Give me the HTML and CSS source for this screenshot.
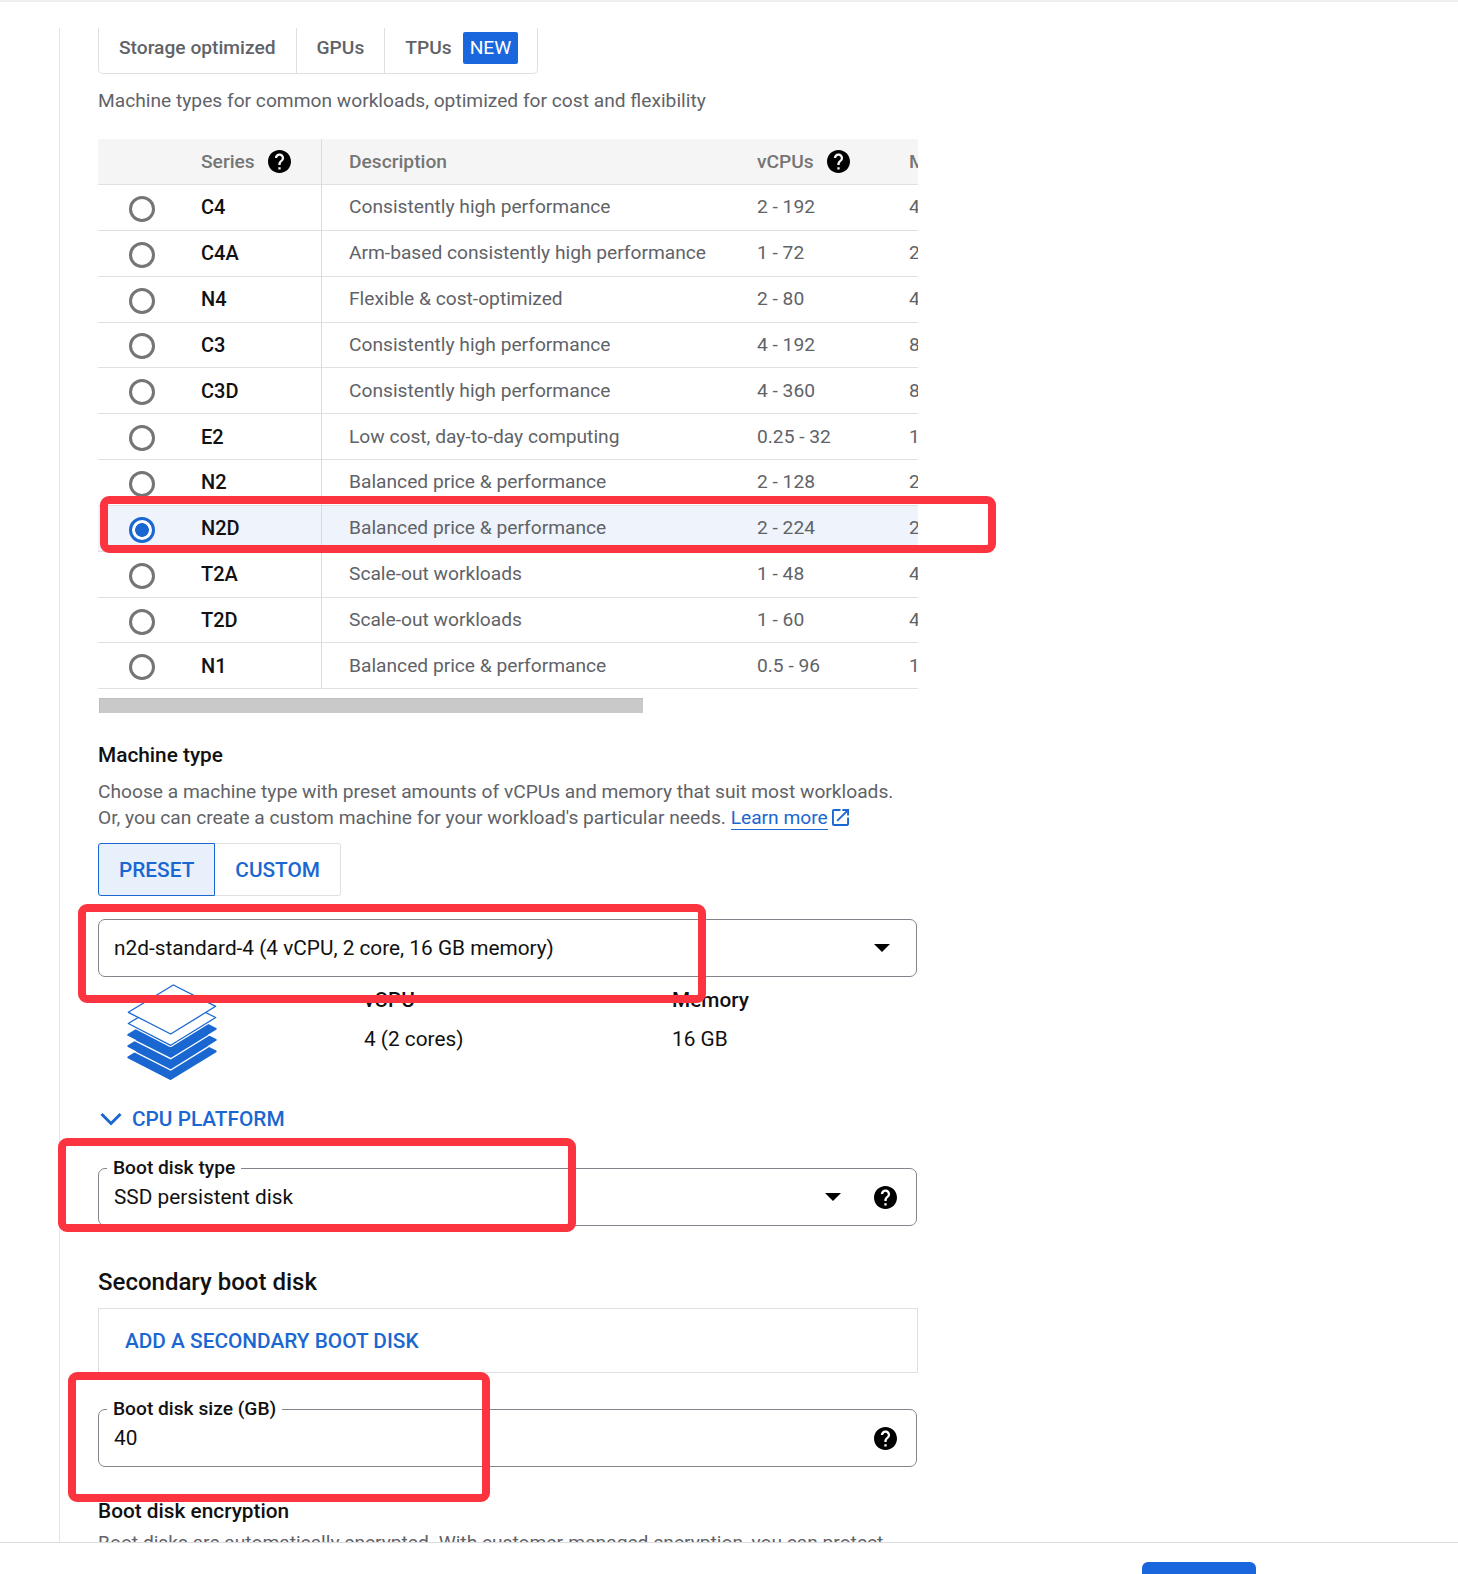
FILE: index.html
```html
<!DOCTYPE html>
<html lang="en">
<head>
<meta charset="utf-8">
<title>Machine configuration</title>
<link rel="stylesheet" href="styles.css">
</head>
<body>
<svg class="defs" width="0" height="0" aria-hidden="true"><defs>
<symbol id="help" viewBox="2 2 20 20"><path d="M12 2C6.48 2 2 6.48 2 12s4.48 10 10 10 10-4.48 10-10S17.52 2 12 2zm1 17h-2v-2h2v2zm2.07-7.75l-.9.92C13.45 12.9 13 13.5 13 15h-2v-.5c0-1.1.45-2.1 1.17-2.83l1.24-1.26c.37-.36.59-.86.59-1.41 0-1.1-.9-2-2-2s-2 .9-2 2H8c0-2.21 1.79-4 4-4s4 1.79 4 4c0 .88-.36 1.68-.93 2.25z"/></symbol>
</defs></svg>
<main class="panel">
  <div class="tabs">
    <div class="tab">Storage optimized</div>
    <div class="tab">GPUs</div>
    <div class="tab tab-last">TPUs <span class="badge">NEW</span></div>
  </div>
  <p class="lead">Machine types for common workloads, optimized for cost and flexibility</p>

  <div class="series-table">
    <div class="row head">
      <div class="c-radio"></div>
      <div class="c-series">Series <svg class="help"><use href="#help"/></svg></div>
      <div class="c-desc">Description</div>
      <div class="c-cpu">vCPUs <svg class="help"><use href="#help"/></svg></div>
      <div class="c-mem">Memory</div>
    </div>
    <div class="row"><div class="c-radio"><span class="radio"></span></div><div class="c-series name">C4</div><div class="c-desc">Consistently high performance</div><div class="c-cpu">2 - 192</div><div class="c-mem">4</div></div>
    <div class="row"><div class="c-radio"><span class="radio"></span></div><div class="c-series name">C4A</div><div class="c-desc">Arm-based consistently high performance</div><div class="c-cpu">1 - 72</div><div class="c-mem">2</div></div>
    <div class="row"><div class="c-radio"><span class="radio"></span></div><div class="c-series name">N4</div><div class="c-desc">Flexible &amp; cost-optimized</div><div class="c-cpu">2 - 80</div><div class="c-mem">4</div></div>
    <div class="row"><div class="c-radio"><span class="radio"></span></div><div class="c-series name">C3</div><div class="c-desc">Consistently high performance</div><div class="c-cpu">4 - 192</div><div class="c-mem">8</div></div>
    <div class="row"><div class="c-radio"><span class="radio"></span></div><div class="c-series name">C3D</div><div class="c-desc">Consistently high performance</div><div class="c-cpu">4 - 360</div><div class="c-mem">8</div></div>
    <div class="row"><div class="c-radio"><span class="radio"></span></div><div class="c-series name">E2</div><div class="c-desc">Low cost, day-to-day computing</div><div class="c-cpu">0.25 - 32</div><div class="c-mem">1</div></div>
    <div class="row"><div class="c-radio"><span class="radio"></span></div><div class="c-series name">N2</div><div class="c-desc">Balanced price &amp; performance</div><div class="c-cpu">2 - 128</div><div class="c-mem">2</div></div>
    <div class="row selected"><div class="c-radio"><span class="radio radio-on"></span></div><div class="c-series name">N2D</div><div class="c-desc">Balanced price &amp; performance</div><div class="c-cpu">2 - 224</div><div class="c-mem">2</div></div>
    <div class="row"><div class="c-radio"><span class="radio"></span></div><div class="c-series name">T2A</div><div class="c-desc">Scale-out workloads</div><div class="c-cpu">1 - 48</div><div class="c-mem">4</div></div>
    <div class="row"><div class="c-radio"><span class="radio"></span></div><div class="c-series name">T2D</div><div class="c-desc">Scale-out workloads</div><div class="c-cpu">1 - 60</div><div class="c-mem">4</div></div>
    <div class="row"><div class="c-radio"><span class="radio"></span></div><div class="c-series name">N1</div><div class="c-desc">Balanced price &amp; performance</div><div class="c-cpu">0.5 - 96</div><div class="c-mem">1</div></div>
  </div>
  <div class="scrollbar"></div>

  <h3 class="heading">Machine type</h3>
  <p class="copy">Choose a machine type with preset amounts of vCPUs and memory that suit most workloads.<br>Or, you can create a custom machine for your workload's particular needs. <a class="link">Learn more</a><svg class="ext" viewBox="3 3 18 18"><path d="M19 19H5V5h7V3H5a2 2 0 00-2 2v14a2 2 0 002 2h14c1.1 0 2-.9 2-2v-7h-2v7zM14 3v2h3.59l-9.83 9.83 1.41 1.41L19 6.41V10h2V3h-7z"/></svg></p>

  <div class="toggle">
    <div class="toggle-btn toggle-on">PRESET</div>
    <div class="toggle-btn">CUSTOM</div>
  </div>

  <div class="field field-select">
    <span class="value">n2d-standard-4 (4 vCPU, 2 core, 16 GB memory)</span>
    <span class="arrow"></span>
  </div>

  <div class="specs">
    <svg class="stack" viewBox="-2 -2 92 98">
      <polygon class="layer-f" points="0.3,72.3 45.3,45 87.7,66.3 42.7,94"/>
      <polygon class="layer-f" points="0.3,61 45.3,33.8 87.7,55 42.7,82.8"/>
      <polygon class="layer-f" points="0.3,49.8 45.3,22.5 87.7,43.8 42.7,71.5"/>
      <polyline class="layer-gap" points="-1,62.8 42.7,85 89,56.4"/>
      <polyline class="layer-gap" points="-1,51.6 42.7,73.7 89,45.2"/>
      <polygon class="layer-halo" points="0.3,38.5 45.3,11.3 87.7,32.5 42.7,60.3"/>
      <polygon class="layer-o" points="0.3,38.5 45.3,11.3 87.7,32.5 42.7,60.3"/>
      <polygon class="layer-o" points="0.3,27.3 45.3,0 87.7,21.3 42.7,49"/>
    </svg>
    <div class="spec spec-cpu"><div class="spec-label">vCPU</div><div class="spec-value">4 (2 cores)</div></div>
    <div class="spec"><div class="spec-label">Memory</div><div class="spec-value">16 GB</div></div>
  </div>

  <div class="expander"><svg class="chev" viewBox="0 0 22 14"><path d="M1.5 2 11 11.5 20.5 2"/></svg>CPU PLATFORM</div>

  <div class="field field-boot">
    <span class="float-label">Boot disk type</span>
    <span class="value">SSD persistent disk</span>
    <span class="arrow arrow-help"></span>
    <svg class="help help-field"><use href="#help"/></svg>
  </div>

  <h2 class="heading-lg">Secondary boot disk</h2>
  <div class="add-box">ADD A SECONDARY BOOT DISK</div>

  <div class="field field-size">
    <span class="float-label">Boot disk size (GB)</span>
    <span class="value">40</span>
    <svg class="help help-field"><use href="#help"/></svg>
  </div>

  <h3 class="heading heading-enc">Boot disk encryption</h3>
  <p class="copy copy-enc">Boot disks are automatically encrypted. With customer-managed encryption, you can protect</p>
</main>
<footer class="footer"><button class="primary" type="button"></button></footer>

<div class="callout callout-series"></div>
<div class="callout callout-machine"></div>
<div class="callout callout-type"></div>
<div class="callout callout-size"></div>
</body>
</html>
```
FILE: styles.css
```css
* { box-sizing: border-box; }
html, body { margin: 0; padding: 0; }
body {
  position: relative;
  height: 1574px;
  overflow: hidden;
  background: #fff;
  border-top: 2px solid #eeeeee;
  font-family: Roboto, "Liberation Sans", sans-serif;
  font-size: 19.2px;
  line-height: 26px;
  color: #5f6368;
}
.defs { position: absolute; }
.panel {
  margin: 26px 0 0 59px;
  height: 1514px;
  width: 900px;
  padding-left: 38px;
  border-left: 1px solid #e4e4e4;
  overflow: hidden;
}
.tabs {
  display: inline-flex;
  height: 46px;
  border: 1px solid #e0e0e0;
  border-top: 0;
  border-radius: 0 0 5px 5px;
  vertical-align: top;
  font-weight: 500;
}
.tab {
  display: flex;
  align-items: center;
  gap: 11px;
  padding: 0 20px 5px;
  border-right: 1px solid #e0e0e0;
}
.tab-last { border-right: 0; padding-right: 19px; }
.badge {
  display: block;
  height: 32px;
  padding: 0 7px;
  line-height: 32px;
  border-radius: 2px;
  background: #1a67dd;
  color: #fff;
  font-weight: 400;
}
.lead { margin: 14px 0 25px; }
.series-table { width: 820px; overflow: hidden; }
.row {
  display: grid;
  grid-template-columns: 103px 121px 408px 152px 36px;
  height: 45.85px;
  border-bottom: 1px solid #e0e0e0;
  align-items: stretch;
}
.row > div { display: flex; align-items: center; white-space: nowrap; }
.head { height: 46px; background: #f5f5f5; font-weight: 500; color: #757575; }
.selected { background: #eef3fc; }
.c-radio { justify-content: center; padding-right: 15px; }
.c-series { border-right: 1px solid #dadce0; gap: 13px; }
.c-desc, .c-cpu, .c-mem { padding-left: 27px; }
.c-cpu { gap: 13px; }
.row > .name { color: #111; font-weight: 500; font-size: 20px; }
.radio {
  display: block;
  width: 26px;
  height: 26px;
  margin-top: 3px;
  border: 3px solid #757575;
  border-radius: 50%;
  background: #fff;
}
.radio-on {
  border-color: #1a67d2;
  background: radial-gradient(circle, #1a67d2 0 6.5px, #fff 7.2px);
}
.help { width: 23px; height: 23px; fill: #000; flex: none; }
.scrollbar {
  width: 544px;
  height: 15px;
  margin: 9px 0 0 1px;
  background: #c9c9c9;
  border-top: 1px solid #bdbdbd;
  border-left: 1px solid #bdbdbd;
}
.heading {
  margin: 29px 0 0;
  font-size: 20.8px;
  line-height: 26px;
  font-weight: 500;
  color: #111;
}
.copy { margin: 11px 0 0; }
.link { color: #1a67d2; border-bottom: 1px solid #1a67d2; }
.ext { width: 17px; height: 17px; margin-left: 4px; fill: #1a67d2; vertical-align: -2px; }
.toggle { display: inline-flex; height: 53px; margin-top: 12px; vertical-align: top; font-weight: 500; color: #1a67d2; font-size: 20.8px; }
.toggle-btn {
  display: flex;
  align-items: center;
  padding: 0 20px;
  border: 1px solid #e0e0e0;
  border-left: 0;
  border-radius: 0 3px 3px 0;
}
.toggle-on {
  background: #e8f0fb;
  border: 1px solid #1a67d2;
  border-radius: 3px 0 0 3px;
}
.field {
  position: relative;
  display: flex;
  align-items: center;
  width: 819px;
  height: 58px;
  padding: 0 15px;
  border: 1px solid #80868b;
  border-radius: 7px;
  color: #111;
  font-size: 20.8px;
}
.field-select { margin-top: 23px; }
.field-boot { margin-top: 36px; }
.field-size { margin-top: 36px; }
.value { flex: 1; }
.arrow {
  width: 0;
  height: 0;
  margin-right: 11px;
  border: 8px solid transparent;
  border-top-color: #000;
  border-bottom: 0;
}
.arrow-help { margin-right: 33px; }
.help-field { margin-right: 4px; }
.float-label {
  position: absolute;
  left: 8px;
  top: -14px;
  padding: 0 6px;
  background: #fff;
  font-size: 19.2px;
  font-weight: 500;
}
.specs { display: flex; height: 95px; margin-top: 8px; color: #111; font-size: 20.8px; }
.stack { width: 92px; height: 98px; margin: -2px 0 0 28px; flex: none; }
.layer-f { fill: #1a67d2; stroke: #1a67d2; stroke-width: 2; stroke-linejoin: round; }
.layer-gap { fill: none; stroke: #fff; stroke-width: 1.3; }
.layer-halo { fill: none; stroke: #fff; stroke-width: 3.6; stroke-linejoin: round; }
.layer-o { fill: #fff; stroke: #1a67d2; stroke-width: 1.3; stroke-linejoin: round; }
.spec { padding-top: 2px; }
.spec-cpu { width: 308px; margin-left: 146px; }
.spec-label { font-weight: 500; }
.spec-value { margin-top: 13px; }
.expander {
  display: flex;
  align-items: center;
  gap: 10px;
  margin-top: 26px;
  padding-left: 2px;
  font-size: 20.8px;
  font-weight: 500;
  color: #1a67d2;
}
.chev { width: 22px; height: 14px; fill: none; stroke: #1a67d2; stroke-width: 3; }
.heading-lg {
  margin: 42px 0 0;
  font-size: 24px;
  line-height: 28px;
  font-weight: 500;
  color: #111;
}
.add-box {
  display: flex;
  align-items: center;
  width: 820px;
  height: 65px;
  margin-top: 12px;
  padding-left: 26px;
  border: 1px solid #e0e0e0;
  font-size: 20.8px;
  font-weight: 500;
  color: #1a67d2;
}
.heading-enc { margin-top: 31px; }
.copy-enc { margin-top: 6px; white-space: nowrap; }
.footer {
  height: 32px;
  padding: 19px 0 0 1142px;
  border-top: 1px solid #dadce0;
  overflow: hidden;
  background: #fff;
}
.primary {
  display: block;
  width: 114px;
  height: 46px;
  border: 0;
  border-radius: 6px;
  background: #1a67dd;
}
.callout {
  position: absolute;
  border: 8px solid #fb3440;
  border-radius: 9px;
  pointer-events: none;
}
.callout-series { left: 100px; top: 494px; width: 896px; height: 57px; }
.callout-machine { left: 78px; top: 902px; width: 628px; height: 99px; }
.callout-type { left: 58px; top: 1136px; width: 518px; height: 94px; }
.callout-size { left: 68px; top: 1370px; width: 422px; height: 130px; }
```
